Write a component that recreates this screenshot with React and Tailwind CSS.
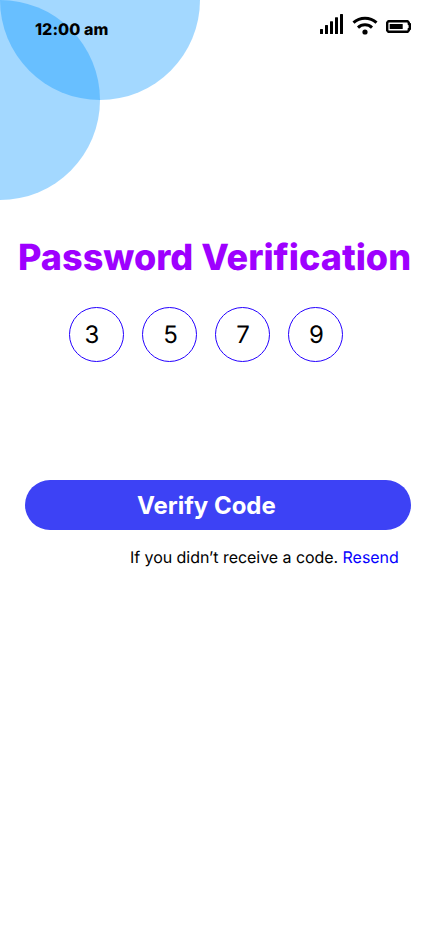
const digits = [
  { value: "3", pad: "pr-[9px]" },
  { value: "5", pad: "pl-[2px]" },
  { value: "7", pad: "pl-px" },
  { value: "9", pad: "pl-[2px]" },
];

function SignalIcon() {
  return (
    <svg width="24" height="20" viewBox="0 0 24 20" fill="#000">
      <rect x="0" y="15" width="3" height="5" rx="0.5" />
      <rect x="5" y="11" width="3" height="9" rx="0.5" />
      <rect x="10" y="7.3" width="3" height="12.7" rx="0.5" />
      <rect x="15" y="3.3" width="3" height="16.7" rx="0.5" />
      <rect x="20" y="0" width="3" height="20" rx="0.5" />
    </svg>
  );
}

function WifiIcon() {
  return (
    <svg width="26" height="20" viewBox="0 0 26 20" fill="none" stroke="#000" strokeWidth="3">
      <path d="M1.5 7.7a17 17 0 0 1 23 0" />
      <path d="M6 12.6a10.2 10.2 0 0 1 14 0" />
      <circle cx="13" cy="17" r="2.6" fill="#000" stroke="none" />
    </svg>
  );
}

function BatteryIcon() {
  return (
    <svg width="26" height="14" viewBox="0 0 26 14">
      <path d="M2.5 1.2H21.5L22.8 2.5V4H23.8V9H22.8V10.5L21.5 11.8H2.5L1.2 10.5V2.5Z" fill="none" stroke="#000" strokeWidth="2.4" strokeLinejoin="round" />
      <rect x="3.7" y="4" width="13" height="5" fill="#000" />
    </svg>
  );
}

export default function App() {
  return (
    <main className="relative h-[932px] w-[430px] overflow-hidden bg-white font-['Inter',sans-serif] text-black antialiased [text-rendering:geometricPrecision]">
      <div className="absolute left-0 -top-[100px] size-[200px] rounded-full bg-[#0094ff]/36" />
      <div className="absolute -left-[100px] top-0 size-[200px] rounded-full bg-[#0094ff]/36" />
      <header className="relative flex h-[60px] items-start pl-[35px] pr-[18px]">
        <span className="mt-[19px] text-base leading-5 font-extrabold tracking-[0.06px]">12:00 am</span>
        <div className="mt-[14px] ml-auto flex items-start gap-2">
          <SignalIcon />
          <div className="mt-px"><WifiIcon /></div>
          <div className="mt-[6px]"><BatteryIcon /></div>
        </div>
      </header>
      <h1 className="mt-[174px] pl-[18px] text-4xl leading-[46px] font-extrabold whitespace-nowrap text-[#9e00ff]">
        Password Verification
      </h1>
      <div className="mt-[27px] ml-[69px] flex gap-[18px]">
        {digits.map((d) => (
          <div key={d.value} className={`flex size-[55px] items-center justify-center rounded-full border border-[#2400ff] text-2xl ${d.pad}`}>
            {d.value}
          </div>
        ))}
      </div>
      <button className="mt-[118px] ml-[25px] flex h-[50px] w-[386px] items-center rounded-full bg-[#3d42f5] pt-px pl-[112px] text-2xl font-bold text-white">
        Verify Code
      </button>
      <p className="mt-[17px] ml-[130px] text-base leading-5 tracking-[-0.05px] whitespace-nowrap">
        If you didn’t receive a code. <a className="text-[#0500ff]">Resend</a>
      </p>
    </main>
  );
}
